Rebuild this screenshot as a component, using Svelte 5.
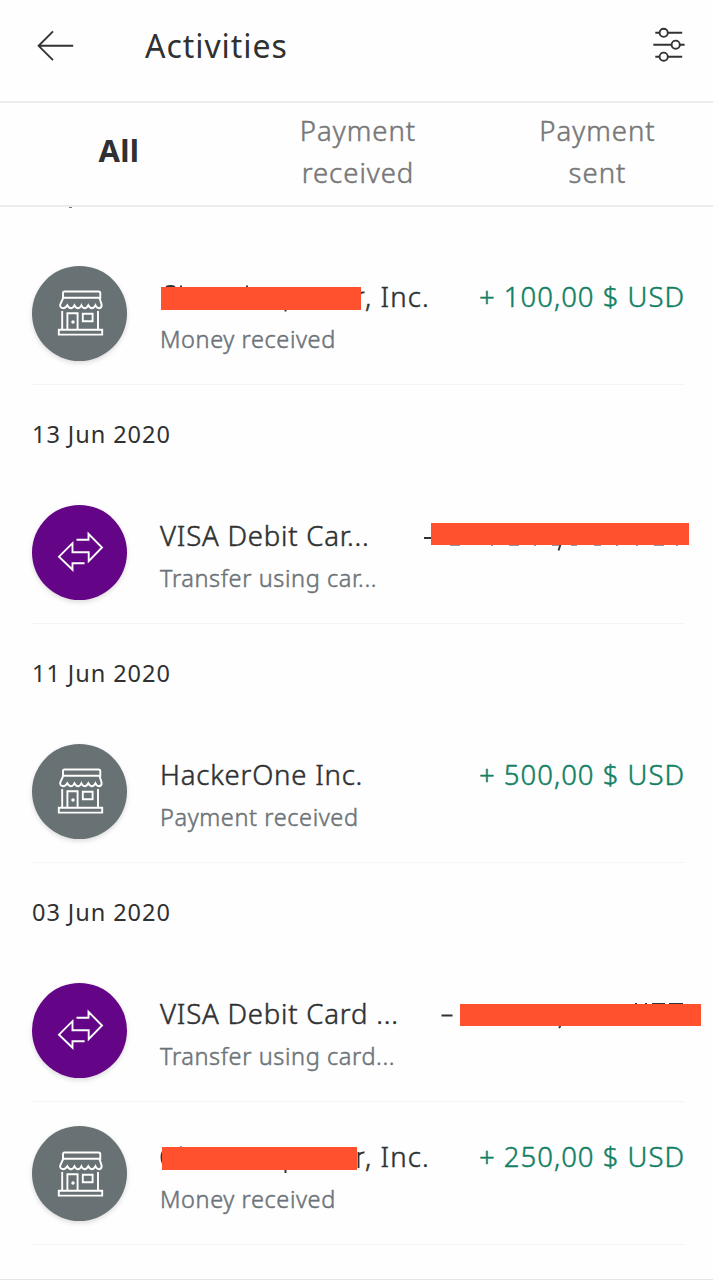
<script lang="ts">
  type Cover = { x: number; y: number; width: number; height: number; marks: string };
  type Activity = {
    kind: 'store' | 'transfer';
    title: string;
    titleCover?: Cover;
    subtitle: string;
    amount?: string;
    amountCover?: Cover;
  };
  type Group = { date: string; items: Activity[] };

  const tabs = ['All', 'Payment received', 'Payment sent'];
  let active = $state('All');

  const groups: Group[] = [
    {
      date: '',
      items: [
        {
          kind: 'store',
          title: ', Inc.',
          titleCover: {
            x: 1, y: 21, width: 200, height: 23,
            marks: 'M6 21Q11 19 15 21M21 19.5v2M87 19.5v2M125.5 44v1.5M200.5 27.5Q202 26 204.5 26.5'
          },
          subtitle: 'Money received',
          amount: '+ 100,00 $ USD'
        }
      ]
    },
    {
      date: '13 Jun 2020',
      items: [
        {
          kind: 'transfer',
          title: 'VISA Debit Car...',
          subtitle: 'Transfer using car...',
          amountCover: {
            x: 271, y: 18, width: 258, height: 22,
            marks:
              'M264 33h8M400.5 39.5l-2 6M290 39.6h10M331 39.6h2M349 39.6h10M374 39.6h2M392 39.6h7M411 39.6h6M434 39.6h7M456 39.6h2M476 39.6h2M494 39.6h10M516 39.6h2'
          }
        }
      ]
    },
    {
      date: '11 Jun 2020',
      items: [
        { kind: 'store', title: 'HackerOne Inc.', subtitle: 'Payment received', amount: '+ 500,00 $ USD' }
      ]
    },
    {
      date: '03 Jun 2020',
      items: [
        {
          kind: 'transfer',
          title: 'VISA Debit Card ...',
          subtitle: 'Transfer using card...',
          amountCover: {
            x: 300, y: 21, width: 241, height: 22,
            marks: 'M281.5 32.5h11M400.5 43l-1.5 2M475 20.9h2M485 20.9h2M492 20.9h13M509 20.9h14'
          }
        },
        {
          kind: 'store',
          title: ', Inc.',
          titleCover: {
            x: 2, y: 21, width: 195, height: 23,
            marks: 'M3 25Q0 31 3 38M21 20.5v1M125.5 44v3M198.5 26v16M199 29Q201 26 204.5 26.5'
          },
          subtitle: 'Money received',
          amount: '+ 250,00 $ USD'
        }
      ]
    }
  ];
</script>

{#snippet cover(c: Cover)}
  <svg class="cover" width="553" height="60" viewBox="0 0 553 60" aria-hidden="true">
    <path d={c.marks} />
    <rect x={c.x} y={c.y} width={c.width} height={c.height} />
  </svg>
{/snippet}

<div class="screen">
  <header>
    <button aria-label="Back">
      <svg width="40" height="34" viewBox="0 0 40 34">
        <path d="M17 3.3 2.6 17.8 17 32.2M2.6 17.8H37.2" />
      </svg>
    </button>
    <h1>Activities</h1>
    <button aria-label="Filter">
      <svg width="32" height="36" viewBox="0 0 32 36">
        <path d="M2.3 5.8H6.3M15 5.8H29.2M.3 17.7H18.4M27 17.7H31.6M2.3 29.7H6.3M15 29.7H29.2" />
        <circle cx="10.7" cy="5.8" r="4.1" />
        <circle cx="22.7" cy="17.7" r="4.1" />
        <circle cx="10.7" cy="29.7" r="4.1" />
      </svg>
    </button>
  </header>

  <nav>
    {#each tabs as tab}
      <button class:active={active === tab} onclick={() => (active = tab)}>{tab}</button>
    {/each}
  </nav>

  <main>
    {#each groups as group}
      {#if group.date}
        <h2>{group.date}</h2>
      {:else}
        <div class="scrolled"><i></i></div>
      {/if}

      {#each group.items as item}
        <article>
          <div class="icon {item.kind}">
            {#if item.kind === 'store'}
              <svg width="48" height="48" viewBox="-1 0 48 48">
                <path d="M7.5 2.5H41.5Q43.3 2.5 43.3 4.3V8.8H6V4.3Q6 2.5 7.5 2.5Z" />
                <path d="M6.2 9 3.2 15.5Q2.7 18.7 6 19.2Q8.8 19.2 10.3 16.3Q11.8 19.2 14 19.2Q16 19.2 17.4 16.3Q18.9 19.2 20.9 19.2Q23 19.2 24.4 16.3Q25.8 19.2 27.8 19.2Q29.8 19.2 31.3 16.3Q32.8 19.2 34.9 19.2Q37 19.2 38.5 16.3Q39.8 19.2 42.2 19.2Q45 18.7 44.6 15.5L42.5 9" />
                <path d="M5.2 22V40.5M41 22V40.5M10.4 40.5V24.2H20.6V40.5M25.8 24.8H35.6V32.2H25.8ZM1.8 40.8H45.2V45.6H1.8Z" />
                <circle cx="16" cy="33" r=".8" />
              </svg>
            {:else}
              <svg width="48" height="48" viewBox="0 2 48 48">
                <path d="M20.5 13.7H32.5V7.8L46 21.5 32.7 35.2V26.2H16.5V17.2L3 30.7 16.5 43.7V37.2H28.6" />
              </svg>
            {/if}
          </div>

          <div class="details">
            <div class="line">
              <strong class:covered={item.titleCover}>{item.title}</strong>
              {#if item.amount}
                <span class="amount">{item.amount}</span>
              {/if}
            </div>
            <p>{item.subtitle}</p>
            {#if item.titleCover}
              {@render cover(item.titleCover)}
            {/if}
            {#if item.amountCover}
              {@render cover(item.amountCover)}
            {/if}
          </div>
        </article>
      {/each}
    {/each}
  </main>
</div>

<style>
  :global(body) {
    background: #fefefe;
  }

  .screen {
    width: 713px;
    height: 1280px;
    box-sizing: border-box;
    overflow: hidden;
    border-bottom: 1px solid #e4e4e4;
    font-family: 'Noto Sans', sans-serif;
    color: #2f3132;
  }

  button {
    margin: 0;
    padding: 0;
    border: 0;
    background: none;
    font: inherit;
    color: inherit;
    cursor: pointer;
  }

  svg {
    display: block;
    fill: none;
    stroke: #333;
    stroke-width: 1.9;
  }

  header {
    display: flex;
    align-items: center;
    height: 101px;
    padding: 0 28px 11px 36px;
    box-sizing: border-box;
  }

  h1 {
    flex: 1;
    margin: 2px 0 0 69px;
    font-size: 32px;
    line-height: 44px;
    font-weight: 400;
    letter-spacing: 0.95px;
  }

  nav {
    display: grid;
    grid-template-columns: 238px 240px 1fr;
    height: 106px;
    box-sizing: border-box;
    border: solid #ececec;
    border-width: 2px 0;
  }

  nav button {
    padding: 0 50px 5px;
    color: #777;
    font-size: 27.5px;
    line-height: 42px;
    letter-spacing: 1px;
    font-weight: 300;
    -webkit-text-stroke: 0.5px;
  }

  nav button:first-child {
    padding: 0 50px 8px;
  }

  nav button:last-child {
    padding: 0 46px 5px 50px;
  }

  nav button.active {
    color: #2f3132;
    font-size: 31px;
    font-weight: 700;
    letter-spacing: 0.3px;
    -webkit-text-stroke: 0;
  }

  main {
    padding: 0 28px 0 32px;
  }

  .scrolled {
    height: 34.6px;
  }

  .scrolled i {
    display: block;
    width: 3px;
    height: 1px;
    margin-left: 37px;
    background: #777;
  }

  h2 {
    display: flex;
    align-items: center;
    height: 95.6px;
    margin: 0;
    padding-top: 3px;
    box-sizing: border-box;
    font-size: 23.5px;
    line-height: 32px;
    font-weight: 400;
    letter-spacing: 0.95px;
  }

  article {
    display: flex;
    gap: 33px;
    height: 143.4px;
    padding-top: 24.4px;
    box-sizing: border-box;
    border-bottom: 1px solid #f5f5f5;
  }

  .icon {
    display: grid;
    place-items: center;
    flex: none;
    width: 95px;
    height: 95px;
    border-radius: 50%;
    box-shadow: 0 2px 5px rgba(0, 0, 0, 0.14);
  }

  .icon svg {
    stroke: #fff;
    stroke-width: 1.9;
  }

  .store {
    background: #687173;
  }

  .transfer {
    background: #640487;
  }

  .details {
    position: relative;
    flex: 1;
    padding-top: 10px;
  }

  .line {
    display: flex;
    justify-content: space-between;
    font-size: 27.5px;
    line-height: 42px;
    white-space: nowrap;
  }

  strong {
    font-weight: 300;
    letter-spacing: 0.8px;
    -webkit-text-stroke: 0.5px;
  }

  .covered {
    margin-left: 205px;
    letter-spacing: 1.1px;
  }

  .amount {
    color: #128064;
    font-weight: 300;
    letter-spacing: 1px;
    -webkit-text-stroke: 0.5px;
  }

  p {
    margin: 0;
    color: #6c7378;
    font-size: 23.5px;
    line-height: 42px;
    font-weight: 300;
    letter-spacing: 0.6px;
    -webkit-text-stroke: 0.5px;
  }

  /* redaction bars run over the row, past its right edge */
  .cover {
    position: absolute;
    top: -0.2px;
    left: 0;
    stroke: #2f3132;
  }

  .cover rect {
    fill: #ff512e;
    stroke: none;
  }
</style>
